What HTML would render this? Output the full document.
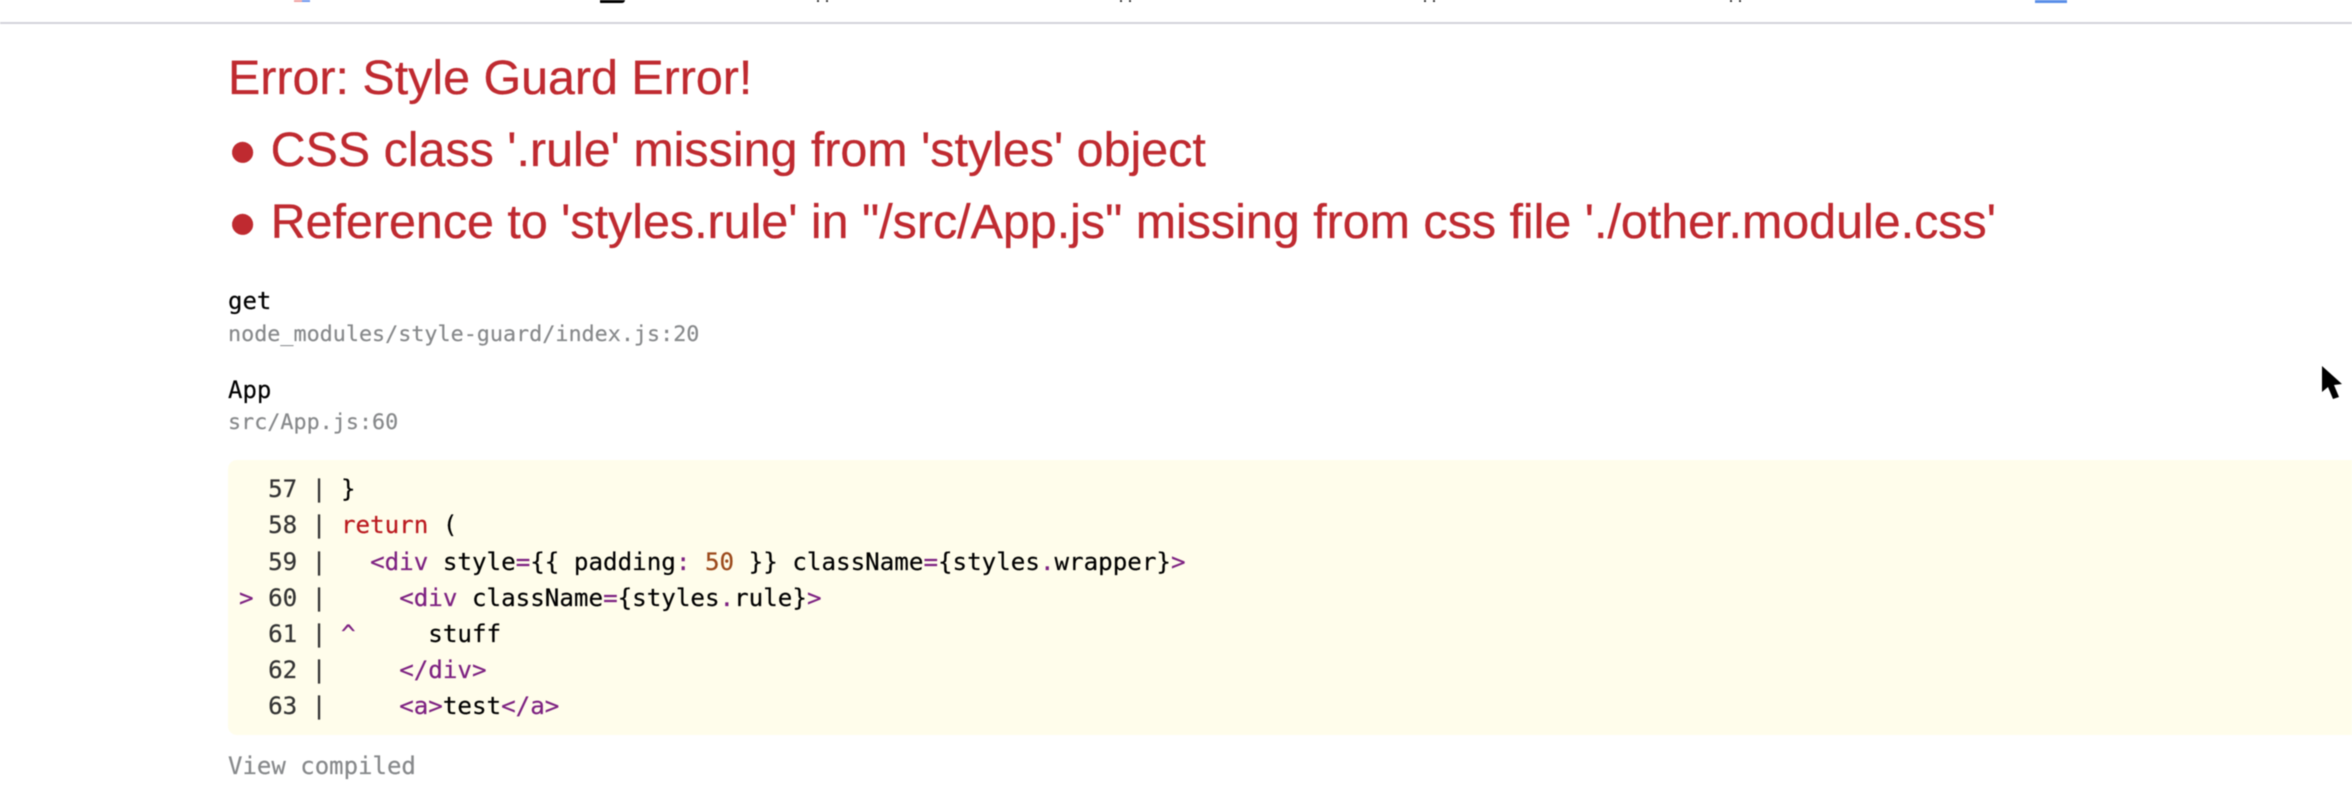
<!DOCTYPE html>
<html>
<head>
<meta charset="utf-8">
<style>
html,body{margin:0;padding:0;background:#fff;width:2352px;height:812px;overflow:hidden;}
#w{position:absolute;left:0;top:0;width:2352px;height:812px;filter:blur(0.4px);overflow:hidden;}
.t{position:absolute;white-space:pre;line-height:1;}
.h{font-family:"Liberation Sans",sans-serif;font-size:48.4px;color:#bf2a30;left:228px;-webkit-text-stroke:0.3px #bf2a30;}
.m{font-family:"DejaVu Sans Mono","Liberation Mono",monospace;font-size:24px;color:#000;left:228px;-webkit-text-stroke:0.2px currentColor;}
.f{font-size:21.75px;color:#87898b;}
.k{font-size:24.2px;left:239px;}
.g{color:#333;}
.p{color:#7d2181;}
.r{color:#bb1a1f;}
.n{color:#9c4a1c;}
#bar{position:absolute;left:0;top:22px;width:2352px;height:2px;background:#d4d4da;}
#code{position:absolute;left:228px;top:460px;width:2124px;height:275px;background:#fffdeb;border-radius:9px 0 0 9px;}
.b{position:absolute;top:0;height:2px;}
</style>
</head>
<body>
<div id="w">
<div class="b" style="left:294px;width:8px;background:#f0a0a0"></div>
<div class="b" style="left:302px;width:8px;background:#6f98ef"></div>
<div class="b" style="left:600px;width:25px;height:3px;border-radius:0 0 12px 3px;background:#000"></div>
<div class="b" style="left:817px;width:2px;background:#333"></div>
<div class="b" style="left:826px;width:2px;background:#333"></div>
<div class="b" style="left:1120px;width:2px;background:#333"></div>
<div class="b" style="left:1129px;width:2px;background:#333"></div>
<div class="b" style="left:1424px;width:2px;background:#333"></div>
<div class="b" style="left:1433px;width:2px;background:#333"></div>
<div class="b" style="left:1730px;width:2px;background:#333"></div>
<div class="b" style="left:1739px;width:2px;background:#333"></div>
<div class="b" style="left:2035px;width:32px;height:3px;background:#5a8ee8"></div>
<div id="bar"></div>

<div class="t h" style="top:54px">Error: Style Guard Error!</div>
<div class="t h" style="top:126px">● CSS class '.rule' missing from 'styles' object</div>
<div class="t h" style="top:198px">● Reference to 'styles.rule' in "/src/App.js" missing from css file './other.module.css'</div>

<div class="t m" style="top:289px">get</div>
<div class="t m f" style="top:324px">node_modules/style-guard/index.js:20</div>
<div class="t m" style="top:378px">App</div>
<div class="t m f" style="top:412px">src/App.js:60</div>

<div id="code"></div>
<div class="t m k" style="top:477px"><span class="g">  57 | </span>}</div>
<div class="t m k" style="top:513px"><span class="g">  58 | </span><span class="r">return</span> (</div>
<div class="t m k" style="top:550px"><span class="g">  59 | </span>  <span class="p">&lt;div</span> style<span class="p">=</span>{{ padding<span class="p">:</span> <span class="n">50</span> }} className<span class="p">=</span>{styles<span class="p">.</span>wrapper}<span class="p">&gt;</span></div>
<div class="t m k" style="top:586px"><span class="p">&gt;</span><span class="g"> 60 | </span>    <span class="p">&lt;div</span> className<span class="p">=</span>{styles<span class="p">.</span>rule}<span class="p">&gt;</span></div>
<div class="t m k" style="top:622px"><span class="g">  61 | </span><span class="p">^</span>     stuff</div>
<div class="t m k" style="top:658px"><span class="g">  62 | </span>    <span class="p">&lt;/div&gt;</span></div>
<div class="t m k" style="top:694px"><span class="g">  63 | </span>    <span class="p">&lt;a&gt;</span>test<span class="p">&lt;/a&gt;</span></div>

<div class="t m" style="top:754px;color:#87898b">View compiled</div>

<svg style="position:absolute;left:2315px;top:360px" width="34" height="46" viewBox="0 0 34 46">
<path d="M7 6 L7 32 L13 27 L18 39 L24 37 L19 25 L27 24 Z" fill="#000" stroke="#fff" stroke-width="2.5" stroke-linejoin="round" paint-order="stroke"/>
</svg>
</div>
</body>
</html>
